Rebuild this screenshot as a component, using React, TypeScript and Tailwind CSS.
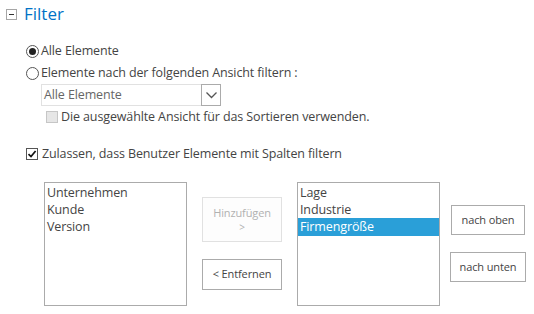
const FONT = "font-['Open_Sans','Noto_Sans',sans-serif]";

function Radio({ checked }: { checked: boolean }) {
  return (
    <span className="flex h-[13px] w-[13px] shrink-0 items-center justify-center rounded-full border border-[#555] bg-white">
      {checked ? <span className="h-[7px] w-[7px] rounded-full bg-[#222]" /> : null}
    </span>
  );
}

function CheckBox({ checked, disabled }: { checked: boolean; disabled?: boolean }) {
  return (
    <span
      className={`flex h-[12px] w-[12px] shrink-0 items-center justify-center border ${
        disabled ? "border-[#c6c6c6] bg-[#e6e6e6]" : "border-[#555] bg-white"
      }`}
    >
      {checked ? (
        <svg width="10" height="10" viewBox="0 0 10 10">
          <path d="M1.5 5.2 L4 7.6 L8.6 2" fill="none" stroke="#111" strokeWidth="1.7" />
        </svg>
      ) : null}
    </span>
  );
}

export default function App() {
  return (
    <div
      className={`h-[314px] w-[534px] overflow-hidden bg-white text-[12.5px] tracking-[-0.12px] text-[#444] ${FONT}`}
    >
      <div className="flex items-center gap-[7px] pl-[6px] pt-[3px]">
        <span className="flex h-[11px] w-[11px] items-center justify-center border border-[#a6a6a6]">
          <span className="h-px w-[5px] bg-[#333]" />
        </span>
        <span className="text-[17px] leading-[22px] tracking-normal text-[#0072c6]">Filter</span>
      </div>

      <div className="pl-[26px] pt-[15px]">
        <div className="flex h-[22px] items-center gap-[2px]">
          <Radio checked />
          <span>Alle Elemente</span>
        </div>
        <div className="flex h-[22px] items-center gap-[2px]">
          <Radio checked={false} />
          <span>Elemente nach der folgenden Ansicht filtern :</span>
        </div>

        <div className="pl-[15px]">
          <div className="flex h-[22px] w-[180px] items-center border border-[#e1e1e1] bg-white">
            <span className="flex-1 pl-[2px] text-[#666]">Alle Elemente</span>
            <span className="-my-px -mr-px flex h-[22px] w-[20px] items-center justify-center border border-[#ababab] bg-white">
              <svg width="13" height="9" viewBox="0 0 13 9">
                <path d="M1.5 1.5 L6.5 6.5 L11.5 1.5" fill="none" stroke="#555" strokeWidth="1.3" />
              </svg>
            </span>
          </div>
          <div className="flex h-[22px] items-center gap-[3px] pl-[5px]">
            <CheckBox checked={false} disabled />
            <span>Die ausgewählte Ansicht für das Sortieren verwenden.</span>
          </div>
        </div>

        <div className="mt-[15px] flex h-[22px] items-center gap-[4px]">
          <CheckBox checked />
          <span>Zulassen, dass Benutzer Elemente mit Spalten filtern</span>
        </div>
      </div>

      <div className="flex pl-[44px] pt-[17px]">
        <div className="h-[124px] w-[143px] border border-[#ababab] pt-px">
          {["Unternehmen", "Kunde", "Version"].map((item) => (
            <div key={item} className="h-[17px] pl-[2px] leading-[17px]">
              {item}
            </div>
          ))}
        </div>

        <div className="flex w-[110px] flex-col items-center gap-[17px] pt-[15px]">
          <button
            type="button"
            disabled
            className="flex h-[45px] w-[80px] flex-col items-center justify-center border border-[#e1e1e1] bg-[#fdfdfd] text-[11px] leading-[14px] text-[#b1b1b1]"
          >
            <span>Hinzufügen</span>
            <span className="text-[10px]">&gt;</span>
          </button>
          <button
            type="button"
            className="h-[31px] w-[80px] border border-[#ababab] bg-white text-[11px] text-[#444]"
          >
            &lt; Entfernen
          </button>
        </div>

        <div className="h-[124px] w-[143px] border border-[#ababab] pt-px">
          {["Lage", "Industrie", "Firmengröße"].map((item) => (
            <div
              key={item}
              className={`pl-[2px] ${
                item === "Firmengröße" ? "h-[18px] bg-[#2a9fd8] leading-[18px] text-white" : "h-[17px] leading-[17px]"
              }`}
            >
              {item}
            </div>
          ))}
        </div>

        <div className="flex flex-col items-center gap-[17px] pl-[10px] pt-[23px]">
          <button type="button" className="h-[30px] w-[74px] border border-[#ababab] bg-white text-[11px] text-[#444]">
            nach oben
          </button>
          <button type="button" className="h-[30px] w-[76px] border border-[#ababab] bg-white text-[11px] text-[#444]">
            nach unten
          </button>
        </div>
      </div>
    </div>
  );
}
